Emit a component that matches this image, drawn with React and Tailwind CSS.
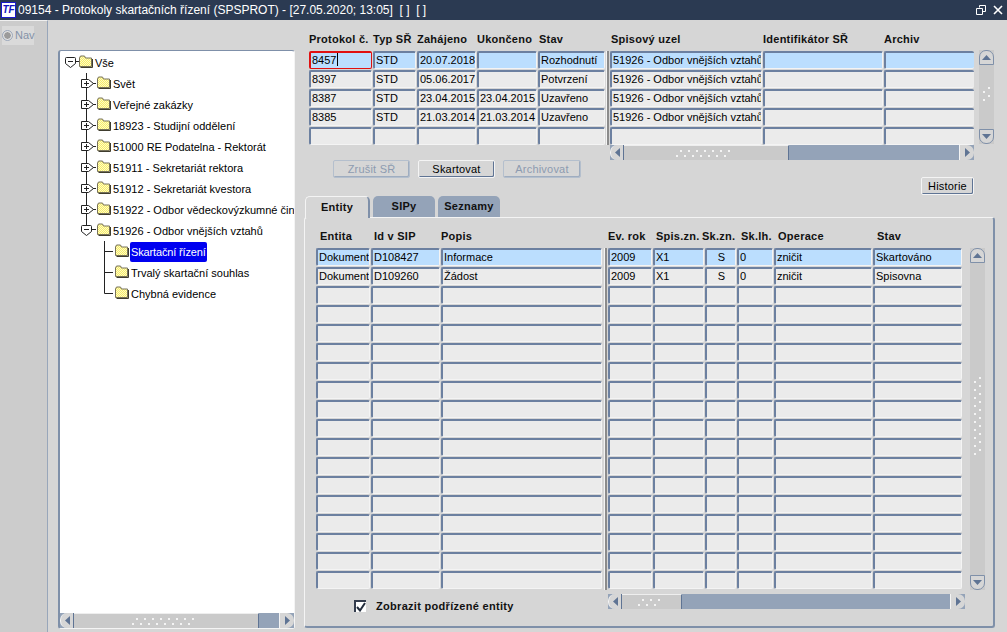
import React from 'react';

const FONT = { fontFamily: '"Liberation Sans", Arial, sans-serif' };

// Upper table columns
const protocolCols = [
  { label: 'Protokol č.', w: 'w-[63px]', head: '' },
  { label: 'Typ SŘ', w: 'w-[43px]', head: '' },
  { label: 'Zahájeno', w: 'w-[59px]', head: '' },
  { label: 'Ukončeno', w: 'w-[60px]', head: '' },
  { label: 'Stav', w: 'w-[67px]', head: 'pl-px' },
];
const protocolRows = [
  ['8457', 'STD', '20.07.2018', '', 'Rozhodnutí'],
  ['8397', 'STD', '05.06.2017', '', 'Potvrzení'],
  ['8387', 'STD', '23.04.2015', '23.04.2015', 'Uzavřeno'],
  ['8385', 'STD', '21.03.2014', '21.03.2014', 'Uzavřeno'],
  ['', '', '', '', ''],
];
const protocolExtraCols = [
  { label: 'Spisový uzel', w: 'w-[152px]', head: 'pl-px' },
  { label: 'Identifikátor SŘ', w: 'w-[120px]', head: '' },
  { label: 'Archiv', w: 'w-[90px]', head: '', open: true },
];
const protocolExtraRows = [
  ['51926 - Odbor vnějších vztahů', '', ''],
  ['51926 - Odbor vnějších vztahů', '', ''],
  ['51926 - Odbor vnějších vztahů', '', ''],
  ['51926 - Odbor vnějších vztahů', '', ''],
  ['', '', ''],
];

// Lower table columns
const entityCols = [
  { label: 'Entita', w: 'w-[54px]', head: 'pl-[4px]' },
  { label: 'Id v SIP', w: 'w-[69px]', head: 'pl-[3px]' },
  { label: 'Popis', w: 'w-[161px]', head: '' },
];
const entityExtraCols = [
  { label: 'Ev. rok', w: 'w-[44px]', head: '' },
  { label: 'Spis.zn.', w: 'w-[51px]', head: 'pl-[3px]' },
  { label: 'Sk.zn.', w: 'w-[31px]', head: '-ml-[3px]', center: true },
  { label: 'Sk.lh.', w: 'w-[36px]', head: 'pl-[4px]' },
  { label: 'Operace', w: 'w-[98px]', head: 'pl-[4px]' },
  { label: 'Stav', w: 'w-[89px]', head: 'pl-[4px]' },
];
const emptyRows = (n, cols) => Array.from({ length: n }, () => Array(cols).fill(''));
const entityRows = [
  ['Dokument', 'D108427', 'Informace'],
  ['Dokument', 'D109260', 'Žádost'],
  ...emptyRows(16, 3),
];
const entityExtraRows = [
  ['2009', 'X1', 'S', '0', 'zničit', 'Skartováno'],
  ['2009', 'X1', 'S', '0', 'zničit', 'Spisovna'],
  ...emptyRows(16, 6),
];

const tree = [
  { kind: 'root', label: 'Vše' },
  { kind: 'closed', label: 'Svět' },
  { kind: 'closed', label: 'Veřejné zakázky' },
  { kind: 'closed', label: '18923 - Studijní oddělení' },
  { kind: 'closed', label: '51000 RE Podatelna - Rektorát' },
  { kind: 'closed', label: '51911 - Sekretariát rektora' },
  { kind: 'closed', label: '51912 - Sekretariát kvestora' },
  { kind: 'closed', label: '51922 - Odbor vědeckovýzkumné čin' },
  { kind: 'open', label: '51926 - Odbor vnějších vztahů' },
  { kind: 'leaf', label: 'Skartační řízení', selected: true },
  { kind: 'leaf', label: 'Trvalý skartační souhlas' },
  { kind: 'lastLeaf', label: 'Chybná evidence' },
];

const Folder = () => (
  <svg width="14" height="13" viewBox="0 0 14 13" className="shrink-0 -mt-[2px]">
    <defs>
      <pattern id="dither" width="2" height="2" patternUnits="userSpaceOnUse">
        <rect width="2" height="2" fill="#f6ec6a" />
        <rect width="1" height="1" fill="#fffbc4" />
        <rect x="1" y="1" width="1" height="1" fill="#fffbc4" />
      </pattern>
    </defs>
    <path d="M0.5 3 L1.5 1 H5.5 L6.5 3 H12.5 V11.5 H0.5 Z" fill="url(#dither)" stroke="#77725a" />
    <path d="M13.5 4 V12.5 H1.5" fill="none" stroke="#3f3d2e" />
  </svg>
);

// Expander with its tree lines, drawn per row
const TreeLines = ({ kind }) => {
  if (kind === 'root') {
    return (
      <svg width="15" height="21" viewBox="0 0 15 21" className="shrink-0">
        <path d="M1.5 6.5 Q1.5 5.5 2.5 5.5 H10.5 Q11.5 5.5 11.5 6.5 V11.5 L6.5 15.5 L1.5 11.5 Z" fill="#fff" stroke="#222" />
        <path d="M4 9.5 H9 M11.5 9.5 H15" stroke="#222" />
      </svg>
    );
  }
  if (kind === 'closed') {
    return (
      <svg width="33" height="21" viewBox="0 0 33 21" className="shrink-0">
        <path d="M22.5 0 V21" stroke="#222" />
        <path d="M17.5 6.5 H24.5 L29.5 10.5 L24.5 14.5 H17.5 Z" fill="#fff" stroke="#222" />
        <path d="M20 10.5 H25 M22.5 8 V13 M29 10.5 H32" stroke="#222" />
      </svg>
    );
  }
  if (kind === 'open') {
    return (
      <svg width="33" height="21" viewBox="0 0 33 21" className="shrink-0">
        <path d="M22.5 0 V6" stroke="#222" />
        <path d="M17.5 6.5 Q17.5 5.5 18.5 5.5 H26.5 Q27.5 5.5 27.5 6.5 V11.5 L22.5 15.5 L17.5 11.5 Z" fill="#fff" stroke="#222" />
        <path d="M20 9.5 H25 M27.5 9.5 H32" stroke="#222" />
      </svg>
    );
  }
  return (
    <svg width="51" height="21" viewBox="0 0 51 21" className="shrink-0">
      <path d={kind === 'lastLeaf' ? 'M40.5 0 V10.5 H49' : 'M40.5 0 V21 M40.5 10.5 H49'} stroke="#222" fill="none" />
    </svg>
  );
};

const TreeRow = ({ kind, label, selected }) => (
  <div className="h-[21px] flex items-center shrink-0">
    <TreeLines kind={kind} />
    <Folder />
    <span
      className={`h-[20px] leading-[20px] whitespace-nowrap text-[11px] ${
        selected ? 'ml-px px-px bg-[#0000f0] text-white rounded-[2px] tracking-[-0.15px]' : 'ml-[2px] text-black'
      }`}
    >
      {label}
    </span>
  </div>
);

const Cell = ({ value, width, selected, focused, center, open }) => {
  let frame = 'border-t-2 border-l-2 border-r border-b border-t-[#6c80a0] border-l-[#6c80a0] border-r-[#f4f4f4] border-b-[#f4f4f4]';
  if (open) frame = 'border-t-2 border-l-2 border-b border-t-[#6c80a0] border-l-[#6c80a0] border-b-[#f4f4f4]';
  if (focused) frame = 'border-t-2 border-l-2 border-r border-b border-[#e01010]';
  return (
    <div
      className={`${width} ${frame} h-[18px] rounded-[2px] overflow-hidden whitespace-nowrap text-[11px] leading-[15px] text-black ${
        selected ? 'bg-[#bbdefe]' : 'bg-[#ebebeb]'
      } ${focused ? 'pl-px' : 'pl-px'} ${center ? 'text-center' : ''}`}
    >
      {value}
      {focused && <span className="inline-block w-px h-[13px] bg-black align-top ml-px" />}
    </div>
  );
};

const Table = ({ cols, rows, focusFirst, headH }) => (
  <div>
    <div className={`flex gap-px items-center ${headH}`}>
      {cols.map(col => (
        <div key={col.label} className={`${col.w} shrink-0`}>
          <div className={`${col.head} text-[11px] tracking-[0.25px] font-bold whitespace-nowrap text-[#111] pt-[7px]`}>{col.label}</div>
        </div>
      ))}
    </div>
    <div className="flex flex-col gap-px">
      {rows.map((row, r) => (
        <div key={r} className="flex gap-px">
          {row.map((value, c) => (
            <Cell
              key={c}
              value={value}
              width={cols[c].w}
              center={cols[c].center}
              open={cols[c].open}
              selected={r === 0}
              focused={focusFirst && r === 0 && c === 0}
            />
          ))}
        </div>
      ))}
    </div>
  </div>
);

const GripH = ({ count }) => (
  <svg width={count * 8 + 4} height="9" className="shrink-0">
    {Array.from({ length: count }, (_, i) => (
      <g key={i}>
        <rect x={i * 8 + 4} y="1" width="2" height="2" fill="#f4f4f4" />
        <rect x={i * 8} y="6" width="2" height="2" fill="#f4f4f4" />
      </g>
    ))}
  </svg>
);

const GripV = ({ count }) => (
  <svg width="10" height={count * 8 + 4} className="shrink-0">
    {Array.from({ length: count }, (_, i) => (
      <g key={i}>
        <rect x="1" y={i * 8 + 4} width="2" height="2" fill="#f4f4f4" />
        <rect x="6" y={i * 8} width="2" height="2" fill="#f4f4f4" />
      </g>
    ))}
  </svg>
);

const Arrow = ({ dir }) => {
  const points = { left: '6,1 6,10 1,5.5', right: '1,1 1,10 6,5.5', up: '1,6 10,6 5.5,1', down: '1,1 10,1 5.5,6' };
  const size = dir === 'left' || dir === 'right' ? { width: 7, height: 11 } : { width: 11, height: 7 };
  return (
    <svg {...size}>
      <polygon points={points[dir]} fill="#5f7494" />
    </svg>
  );
};

const HScroll = ({ thumb, dots, widthClass }) => (
  <div className={`${widthClass} h-[15px] bg-[#94a3b8] flex items-stretch`}>
    <div className="w-[14px] shrink-0 bg-[#d6d6d6] border-l border-[#f4f4f4] border-r border-r-[#5f7494] rounded-l-[7px] flex items-center justify-center">
      <Arrow dir="left" />
    </div>
    <div className={`${thumb} shrink-0 bg-[#cacaca] border-t border-[#eeeeee] border-r border-r-[#5f7494] flex items-center justify-center`}>
      <GripH count={dots} />
    </div>
    <div className="flex-1" />
    <div className="w-[15px] shrink-0 bg-[#d6d6d6] border-l border-[#f4f4f4] rounded-r-[7px] flex items-center justify-center">
      <Arrow dir="right" />
    </div>
  </div>
);

const VScroll = ({ heightClass, dots }) => (
  <div className={`${heightClass} w-[15px] flex flex-col bg-[#cacaca]`}>
    <div className="h-[15px] shrink-0 bg-[#d6d6d6] border border-[#7f90a9] rounded-t-[7px] flex items-center justify-center">
      <Arrow dir="up" />
    </div>
    <div className="flex-1 flex items-center justify-center">
      <GripV count={dots} />
    </div>
    <div className="h-[15px] shrink-0 bg-[#d6d6d6] border border-[#7f90a9] rounded-b-[7px] flex items-center justify-center">
      <Arrow dir="down" />
    </div>
  </div>
);

const Button = ({ label, width, disabled }) => (
  <div
    className={`${width} h-[18px] shrink-0 rounded-[2px] border flex items-center justify-center text-[11px] tracking-[0.2px] ${
      disabled
        ? 'border-[#b4bfcd] text-[#8d9bb0] shadow-[inset_-1px_-1px_0_#9fadc0]'
        : 'border-[#f4f4f4] text-black shadow-[inset_-1px_-1px_0_#5f7494]'
    }`}
  >
    {label}
  </div>
);

const Separator = ({ heightClass }) => (
  <div className={`${heightClass} w-[3px] shrink-0 border-l border-[#f4f4f4] bg-[#8b8b8b] border-r-0`} />
);

const Tab = ({ label, width, active }) => (
  <div
    className={`${width} shrink-0 rounded-t-[5px] flex items-center justify-center text-[11px] tracking-[0.25px] font-bold text-[#111] ${
      active
        ? 'h-[22px] -mb-px bg-[#d6d6d6] border-t border-l border-[#f4f4f4] border-r-2 border-r-[#7f90a9] relative z-10'
        : 'h-[21px] bg-[#94a3b8]'
    }`}
  >
    {label}
  </div>
);

const App = () => {
  return (
    <div className="w-[1007px] h-[632px] overflow-hidden flex flex-col bg-[#d6d6d6]" style={FONT}>
      {/* Title bar */}
      <div className="h-[20px] shrink-0 bg-[#2b3a52] flex items-center text-white">
        <div className="w-[15px] h-[16px] ml-px bg-white border border-[#1a1ac8] text-[#1212c0] text-[10px] leading-[14px] font-bold italic text-center shrink-0">
          TF
        </div>
        <span className="ml-[2px] text-[12px] whitespace-nowrap">
          09154 - Protokoly skartačních řízení (SPSPROT) - [27.05.2020; 13:05]&nbsp; [ ]&nbsp; [ ]
        </span>
        <div className="ml-auto mr-[4px] flex items-center gap-[7px]">
          <svg width="10" height="10" viewBox="0 0 10 10">
            <path d="M3.5 2.5 V0.5 H9.5 V6.5 H7 M0.5 3.5 H6.5 V9.5 H0.5 Z" fill="none" stroke="#fff" />
          </svg>
          <svg width="10" height="10" viewBox="0 0 10 10">
            <path d="M1 1 L9 9 M9 1 L1 9" fill="none" stroke="#fff" strokeWidth="1.6" />
          </svg>
        </div>
      </div>

      <div className="flex-1 flex min-h-0">
        {/* Navigator strip */}
        <div className="w-[48px] shrink-0 bg-[#cccccc] border-r border-r-[#98a6ba] border-t border-t-[#f0f0f0] pt-[5px] pl-[2px]">
          <div className="w-[32px] h-[19px] bg-[#dadada] flex items-center gap-[3px] text-[11px] text-[#8492a8]">
            <span className="w-[9px] h-[9px] rounded-full bg-[#9b9b9b] border border-[#f0f0f0] outline outline-[#9aa7ba] shrink-0 ml-px" />
            Nav
          </div>
        </div>

        {/* Tree */}
        <div className="w-[247px] shrink-0 pl-[10px] pt-[30px] pb-[3px] flex">
          <div className="w-[237px] h-full flex flex-col rounded-[3px] bg-white border-t border-l-2 border-t-[#7f90a9] border-l-[#7f90a9] border-r border-r-[#f4f4f4] border-b border-b-[#f4f4f4]">
            <div className="flex-1 min-h-0 overflow-hidden pl-[4px] pt-[1px]">
              {tree.map(node => (
                <TreeRow key={node.label} {...node} />
              ))}
            </div>
            <HScroll widthClass="w-full" thumb="w-[185px]" dots={8} />
          </div>
        </div>

        {/* Forms */}
        <div className="flex-1 min-w-0 pl-[9px] flex flex-col">
          <div className="h-[176px] shrink-0 flex pl-[5px]">
            <div className="w-[296px] shrink-0">
              <Table cols={protocolCols} rows={protocolRows} focusFirst headH="h-[31px]" />
              <div className="mt-[15px] ml-[24px] flex gap-[8px]">
                <Button label="Zrušit SŘ" width="w-[77px]" disabled />
                <Button label="Skartovat" width="w-[77px]" />
                <Button label="Archivovat" width="w-[78px]" disabled />
              </div>
            </div>
            <div className="pt-[31px] ml-[1px] mr-[1px]">
              <Separator heightClass="h-[94px]" />
            </div>
            <div className="w-[364px] shrink-0 flex flex-col">
              <div className="overflow-hidden">
                <Table cols={protocolExtraCols} rows={protocolExtraRows} headH="h-[31px]" />
              </div>
              <HScroll widthClass="w-full" thumb="w-[165px]" dots={7} />
              <div className="mt-[17px] flex justify-end">
                <Button label="Historie" width="w-[53px]" />
              </div>
            </div>
            <div className="pt-[30px] ml-[5px]">
              <VScroll heightClass="h-[94px]" dots={2} />
            </div>
          </div>

          {/* Tabs */}
          <div className="h-[21px] shrink-0 flex items-end gap-[3px] pl-px">
            <Tab label="Entity" width="w-[65px]" active />
            <Tab label="SIPy" width="w-[62px]" />
            <Tab label="Seznamy" width="w-[62px]" />
          </div>
          <div className="w-[691px] h-[411px] shrink-0 rounded-[3px] bg-[#d6d6d6] border-t border-l border-t-[#f4f4f4] border-l-[#f4f4f4] border-r-2 border-b-2 border-r-[#7f90a9] border-b-[#7f90a9] flex pl-[11px]">
            <div className="w-[286px] shrink-0">
              <Table cols={entityCols} rows={entityRows} headH="h-[30px]" />
              <div className="mt-[9px] ml-[38px] flex items-center gap-[10px]">
                <div className="w-[12px] h-[12px] bg-white border-t-2 border-l-2 border-[#333c4d] flex items-center justify-center">
                  <svg width="10" height="10" viewBox="0 0 10 10">
                    <path d="M1 5 L4 8.5 L9 1" fill="none" stroke="#222c3c" strokeWidth="2" />
                  </svg>
                </div>
                <span className="text-[11px] tracking-[0.3px] font-bold text-[#111] whitespace-nowrap">Zobrazit podřízené entity</span>
              </div>
            </div>
            <div className="pt-[30px] ml-[2px] mr-[1px]">
              <Separator heightClass="h-[342px]" />
            </div>
            <div className="w-[357px] shrink-0 flex flex-col">
              <Table cols={entityExtraCols} rows={entityExtraRows} headH="h-[30px]" />
              <div className="mt-[5px]">
                <HScroll widthClass="w-full" thumb="w-[60px]" dots={3} />
              </div>
            </div>
            <div className="pt-[30px] ml-[5px]">
              <VScroll heightClass="h-[342px]" dots={10} />
            </div>
          </div>
        </div>
      </div>
    </div>
  );
};

export default App;
